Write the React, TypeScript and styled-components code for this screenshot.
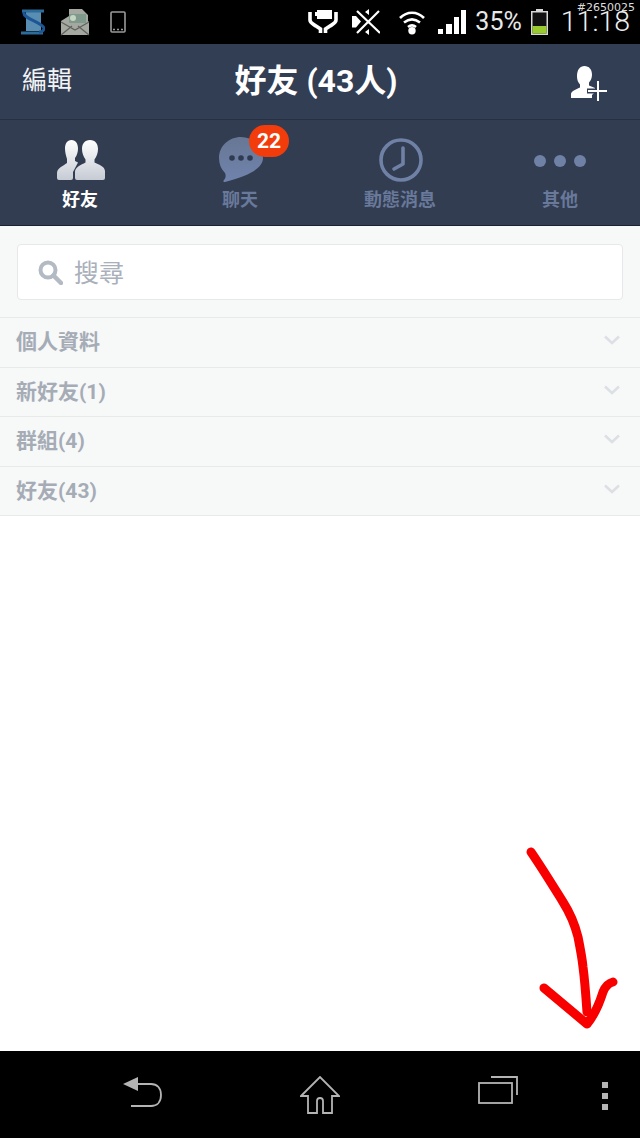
import React from 'react';
import styled, { createGlobalStyle } from 'styled-components';

const CJK = `Roboto, "Noto Sans CJK TC", sans-serif`;

const GlobalStyle = createGlobalStyle`
  html, body {
    margin: 0;
    padding: 0;
    background: #fff;
  }
  body {
    font-family: ${CJK};
  }
`;

const SECTIONS = ['個人資料', '新好友(1)', '群組(4)', '好友(43)'];

export default function App() {
  return (
    <Page>
      <GlobalStyle />
      <StatusBar>
        <StatusGroup>
          <StatusIcon $ml={20} width="25" height="28" viewBox="0 0 25 28">
            <rect x="6" y="3" width="15" height="20" fill="#5a8db2" />
            <path d="M2 3h22" stroke="#2c6c9b" strokeWidth="3" />
            <path d="M1 25h22" stroke="#2c6c9b" strokeWidth="3" />
            <path d="M4 4c-2 7 17 9 20 16 0 2-2 4-5 4" fill="none" stroke="#1d5694" strokeWidth="3" />
          </StatusIcon>
          <StatusIcon $ml={15} width="30" height="28" viewBox="0 0 30 28">
            <path d="M1 13 9 8V1h13l6 6v6l1 1v13H1z" fill="#a4a8a0" />
            <rect x="9" y="6" width="17" height="9" fill="#7f9a8c" />
            <circle cx="13" cy="10" r="3" fill="#c5d6c0" />
            <path d="M1 14l14 8 14-8M1 27l11-9M29 27l-11-9" fill="none" stroke="#5f625c" strokeWidth="1.2" />
          </StatusIcon>
          <StatusIcon $ml={20} width="16" height="22" viewBox="0 0 16 22">
            <rect x="1" y="1" width="14" height="20" rx="1" fill="none" stroke="#9a9a9a" strokeWidth="1.6" />
            <path d="M3 18.500h2M7 18.500h2M11 18.500h2" stroke="#9a9a9a" strokeWidth="1.4" />
          </StatusIcon>
        </StatusGroup>
        <StatusGroup>
          <StatusIcon $ml={0} width="30" height="26" viewBox="0 0 30 26">
            <path d="M7 3h2V1h15v9H9V7H7z" fill="#fff" />
            <path d="M2 3v8c0 3 3 4 6 6l4.500 3v4M28 3v8c0 3-3 4-6 6l-4.500 3v4" fill="none" stroke="#fff" strokeWidth="3.600" />
          </StatusIcon>
          <StatusIcon $ml={14} width="28" height="26" viewBox="0 0 28 26">
            <path d="M5 2l23 22M27 2 5 24" stroke="#fff" strokeWidth="2.200" fill="none" />
            <path d="M0 7h4l5 5.500-5 6H0zM17 0v6l-4-3zM17 20v6l-4-3z" fill="#fff" />
          </StatusIcon>
          <StatusIcon $ml={18} width="28" height="25" viewBox="0 0 28 25">
            <path d="M2 8c7-7 17-7 24 0M6 12.500c5-4 11-4 16 0M10 17c2.500-2 5.500-2 8 0" fill="none" stroke="#fff" strokeWidth="2.600" />
            <circle cx="14" cy="20.700" r="3.700" fill="#fff" />
          </StatusIcon>
          <StatusIcon $ml={12} width="28" height="25" viewBox="0 0 28 25">
            <path d="M0 19h5v5H0zM8 14h6v10H8zM16 7h5v17h-5zM23 0h5v24h-5z" fill="#fff" />
          </StatusIcon>
          <BatteryText>35%</BatteryText>
          <StatusIcon $ml={9} width="17" height="26" viewBox="0 0 17 26">
            <path d="M5 0h7v2h5v24H0V2h5z" fill="#d8d8d8" />
            <rect x="1.500" y="3.500" width="14" height="21" fill="#111" />
            <rect x="1.500" y="17" width="14" height="7.500" fill="#9acb2e" />
          </StatusIcon>
          <Clock>11:18</Clock>
        </StatusGroup>
        <Watermark>#2650025</Watermark>
      </StatusBar>

      <TitleBar>
        <EditButton>編輯</EditButton>
        <Title>好友 (43人)</Title>
        <AddFriend width="38" height="36" viewBox="0 0 38 36">
          <path d="M14.500 1c4.500 0 7.500 3.500 7.500 8.500 0 3-1 6-3 8v3l6 2.500v4l-3 3v3H1v-4c0-3 6-5 9-6.500v-3c-2-2-3-5-3-8C7 4.500 10 1 14.500 1z" fill="#fff" />
          <path d="M28 15v21M17 26h21" stroke="#323e54" strokeWidth="5" />
          <path d="M28 16v20M18 26h19" stroke="#fff" strokeWidth="2" />
        </AddFriend>
      </TitleBar>

      <Tabs>
        <Tab>
          <IconSlot>
            <svg width="48" height="40" viewBox="0 0 48 40">
              <defs>
                <linearGradient id="friends" x1="0" y1="0" x2="0" y2="1">
                  <stop offset="0" stopColor="#ffffff" />
                  <stop offset="1" stopColor="#c6cbd4" />
                </linearGradient>
              </defs>
              <path d="M14.500 0c4.500 0 6.500 4 6.500 8.500 0 3-1 7-3 9.500v3l3 1.500-5 9.500v6q0 2-2 2H2q-2 0-2-2v-5c0-5 6-7 10-10v-4C9 16 8 12 8 8.500 8 4 10 0 14.500 0z" fill="url(#friends)" />
              <path d="M33 0c5.500 0 8 4 8 9 0 4-1.500 8-3.500 10.500v3c4 2 10 3.500 10.500 8.500v7q0 2-2 2H20q-2 0-2-2v-6c0-5 6-7 10.500-9.500v-3C26.500 17 25 13 25 9c0-5 2.500-9 8-9z" fill="url(#friends)" />
            </svg>
          </IconSlot>
          <TabLabel $active>好友</TabLabel>
        </Tab>
        <Tab>
          <IconSlot>
            <svg width="44" height="46" viewBox="0 0 44 46">
              <defs>
                <linearGradient id="bubble" x1="0" y1="0" x2="0" y2="1">
                  <stop offset="0" stopColor="#677794" />
                  <stop offset="1" stopColor="#7083ad" />
                </linearGradient>
              </defs>
              <path d="M22 0c12 0 22 9 22 21 0 9-11 17-38 24-1.500.5-2-1-1-2 2-2 2-5 1-7-4-4-6-9-6-15C0 9 10 0 22 0z" fill="url(#bubble)" />
              <circle cx="13" cy="21" r="2.800" fill="#2f3b52" />
              <circle cx="22" cy="21" r="2.800" fill="#2f3b52" />
              <circle cx="31" cy="21" r="2.800" fill="#2f3b52" />
            </svg>
            <Badge>22</Badge>
          </IconSlot>
          <TabLabel>聊天</TabLabel>
        </Tab>
        <Tab>
          <IconSlot>
            <svg width="44" height="44" viewBox="0 0 44 44">
              <circle cx="22" cy="22" r="20" fill="none" stroke="#7081a6" strokeWidth="3.600" />
              <path d="M24 10v16l-9 5" fill="none" stroke="#7081a6" strokeWidth="3.600" strokeLinecap="round" strokeLinejoin="round" />
            </svg>
          </IconSlot>
          <TabLabel>動態消息</TabLabel>
        </Tab>
        <Tab>
          <IconSlot>
            <svg width="54" height="14" viewBox="0 0 54 14">
              <circle cx="6" cy="8" r="6" fill="#7081a6" />
              <circle cx="26" cy="8" r="6" fill="#7081a6" />
              <circle cx="46" cy="8" r="6" fill="#7081a6" />
            </svg>
          </IconSlot>
          <TabLabel>其他</TabLabel>
        </Tab>
      </Tabs>

      <SearchArea>
        <SearchBox>
          <svg width="25" height="25" viewBox="0 0 25 25">
            <circle cx="10" cy="10" r="7.500" fill="none" stroke="#b3bac3" strokeWidth="4" />
            <path d="M15.500 15.500 23 23" stroke="#b3bac3" strokeWidth="4.500" strokeLinecap="round" />
          </svg>
          <Placeholder>搜尋</Placeholder>
        </SearchBox>
      </SearchArea>

      <SectionList>
        {SECTIONS.map(name => (
          <SectionRow key={name}>
            <SectionName>{name}</SectionName>
            <Chevron width="16" height="10" viewBox="0 0 16 10">
              <path d="M1 1.500 8 8l7-6.500" fill="none" stroke="#dcdfe3" strokeWidth="2.400" />
            </Chevron>
          </SectionRow>
        ))}
      </SectionList>

      <Blank />

      <NavBar>
        <NavCell>
          <svg width="42" height="32" viewBox="0 0 42 32">
            <path d="M2 8 17 1v14z" fill="#b4b4b4" />
            <path d="M17 8h13c6 0 10 4 10 11s-4 11-10 11H10" fill="none" stroke="#b4b4b4" strokeWidth="1.800" />
          </svg>
        </NavCell>
        <NavCell>
          <svg width="40" height="38" viewBox="0 0 40 38">
            <path d="M1 20 20 1l19 19h-7v17h-9V25c0-4-6-4-6 0v12H8V20z" fill="none" stroke="#b4b4b4" strokeWidth="1.800" />
          </svg>
        </NavCell>
        <NavCell>
          <svg width="40" height="28" viewBox="0 0 40 28">
            <rect x="1" y="7" width="33" height="20" fill="none" stroke="#b4b4b4" strokeWidth="1.800" />
            <path d="M13 1h26v18" fill="none" stroke="#b4b4b4" strokeWidth="1.800" />
          </svg>
        </NavCell>
        <NavCell>
          <MenuDots>
            <i />
            <i />
            <i />
          </MenuDots>
        </NavCell>
      </NavBar>

      <ArrowMark width="100" height="190" viewBox="0 0 100 190">
        <path
          d="M11 12C22 28 33 46 43 62c7 11 12 23 15 35 2 10 4 20 5 30 2 15 3 30 4 45"
          fill="none"
          stroke="#f80000"
          strokeWidth="9"
          strokeLinecap="round"
          strokeLinejoin="round"
        />
        <path
          d="M24 148l43 36c5-6 11-16 16-32 2-5 6-9 10-10"
          fill="none"
          stroke="#f80000"
          strokeWidth="9"
          strokeLinecap="round"
          strokeLinejoin="round"
        />
      </ArrowMark>
    </Page>
  );
}

const Page = styled.div`
  position: relative;
  width: 640px;
  height: 1138px;
  display: flex;
  flex-direction: column;
  overflow: hidden;
  background: #fff;
`;

/** 상단 상태바 */
const StatusBar = styled.div`
  position: relative;
  height: 44px;
  flex: none;
  display: flex;
  align-items: center;
  justify-content: space-between;
  padding-right: 10px;
  background: #000;
`;

const StatusGroup = styled.div`
  display: flex;
  align-items: center;
`;

const StatusIcon = styled.svg<{ $ml: number }>`
  flex: none;
  margin-left: ${p => p.$ml}px;
`;

const BatteryText = styled.span`
  margin-left: 9px;
  color: #e8e8e8;
  font: 400 25px/30px Roboto, sans-serif;
`;

const Clock = styled.span`
  margin-left: 13px;
  color: #eee;
  font: 300 28.5px/34px Roboto, sans-serif;
`;

const Watermark = styled.span`
  position: absolute;
  top: 1px;
  right: 5px;
  color: #ddd;
  font: 400 11px/14px 'DejaVu Sans', sans-serif;
`;

const TitleBar = styled.div`
  height: 76px;
  flex: none;
  display: flex;
  align-items: center;
  justify-content: space-between;
  padding: 0 32px 2px 22px;
  box-sizing: border-box;
  position: relative;
  background: #323e54;
  border-bottom: 1px solid #263042;
`;

const EditButton = styled.span`
  color: #f2f3f5;
  font-size: 25px;
  line-height: 34px;
`;

const Title = styled.h1`
  position: absolute;
  left: 0;
  right: 8px;
  margin: 0;
  text-align: center;
  color: #fff;
  font-size: 32px;
  line-height: 40px;
  font-weight: 700;
  pointer-events: none;
`;

const AddFriend = styled.svg`
  display: block;
  margin-top: 5px;
`;

/** 탭 */
const Tabs = styled.div`
  height: 106px;
  flex: none;
  display: grid;
  grid-template-columns: repeat(4, 160px);
  box-sizing: border-box;
  background: #323d52;
  border-bottom: 1px solid #1c2330;
`;

const Tab = styled.div`
  display: flex;
  flex-direction: column;
  align-items: center;
  padding-top: 17px;
`;

const IconSlot = styled.div`
  position: relative;
  height: 46px;
  margin-left: 2px;
  display: flex;
  align-items: center;
  justify-content: center;
`;

const TabLabel = styled.span<{ $active?: boolean }>`
  margin-top: 4px;
  color: ${p => (p.$active ? '#fff' : '#69799a')};
  font-size: 18px;
  line-height: 26px;
  font-weight: 700;
`;

const Badge = styled.span`
  position: absolute;
  top: -12px;
  left: 30px;
  width: 40px;
  height: 32px;
  border-radius: 16px;
  background: #f23c0b;
  color: #fff;
  font: 700 21px/32px Roboto, sans-serif;
  text-align: center;
`;

/** 검색 */
const SearchArea = styled.div`
  height: 91px;
  flex: none;
  padding: 18px 17px 0;
  box-sizing: border-box;
  background: #f7f8f8;
`;

const SearchBox = styled.div`
  height: 56px;
  display: flex;
  align-items: center;
  gap: 11px;
  padding-left: 20px;
  box-sizing: border-box;
  background: #fff;
  border: 1px solid #e6e8e9;
  border-radius: 4px;
`;

const Placeholder = styled.span`
  color: #a9b0ba;
  font-size: 25px;
  line-height: 34px;
  padding-top: 3px;
`;

const SectionList = styled.div`
  flex: none;
  border-top: 1px solid #e8eaea;
  background: #f7f8f8;
`;

const SectionRow = styled.div`
  height: 49.5px;
  display: flex;
  align-items: center;
  justify-content: space-between;
  padding: 0 20px 0 16px;
  box-sizing: border-box;
  border-bottom: 1px solid #e8eaea;
`;

const SectionName = styled.span`
  color: #a5acb6;
  font-size: 21px;
  line-height: 30px;
  font-weight: 700;
`;

const Chevron = styled.svg`
  margin-bottom: 4px;
`;

const Blank = styled.div`
  flex: 1;
  background: #fff;
`;

/** 하단바 */
const NavBar = styled.div`
  height: 87px;
  flex: none;
  display: grid;
  grid-template-columns: repeat(3, 178px) 36px;
  padding-left: 53px;
  background: #000;
`;

const NavCell = styled.div`
  display: flex;
  justify-content: center;
  padding-top: 25px;
  height: 62px;
`;

const MenuDots = styled.div`
  display: flex;
  flex-direction: column;
  gap: 5px;
  padding-top: 6px;

  i {
    display: block;
    width: 6px;
    height: 6px;
    background: #b4b4b4;
  }
`;

/** 스크린샷 위에 손으로 그린 화살표 */
const ArrowMark = styled.svg`
  position: absolute;
  left: 520px;
  top: 840px;
`;
